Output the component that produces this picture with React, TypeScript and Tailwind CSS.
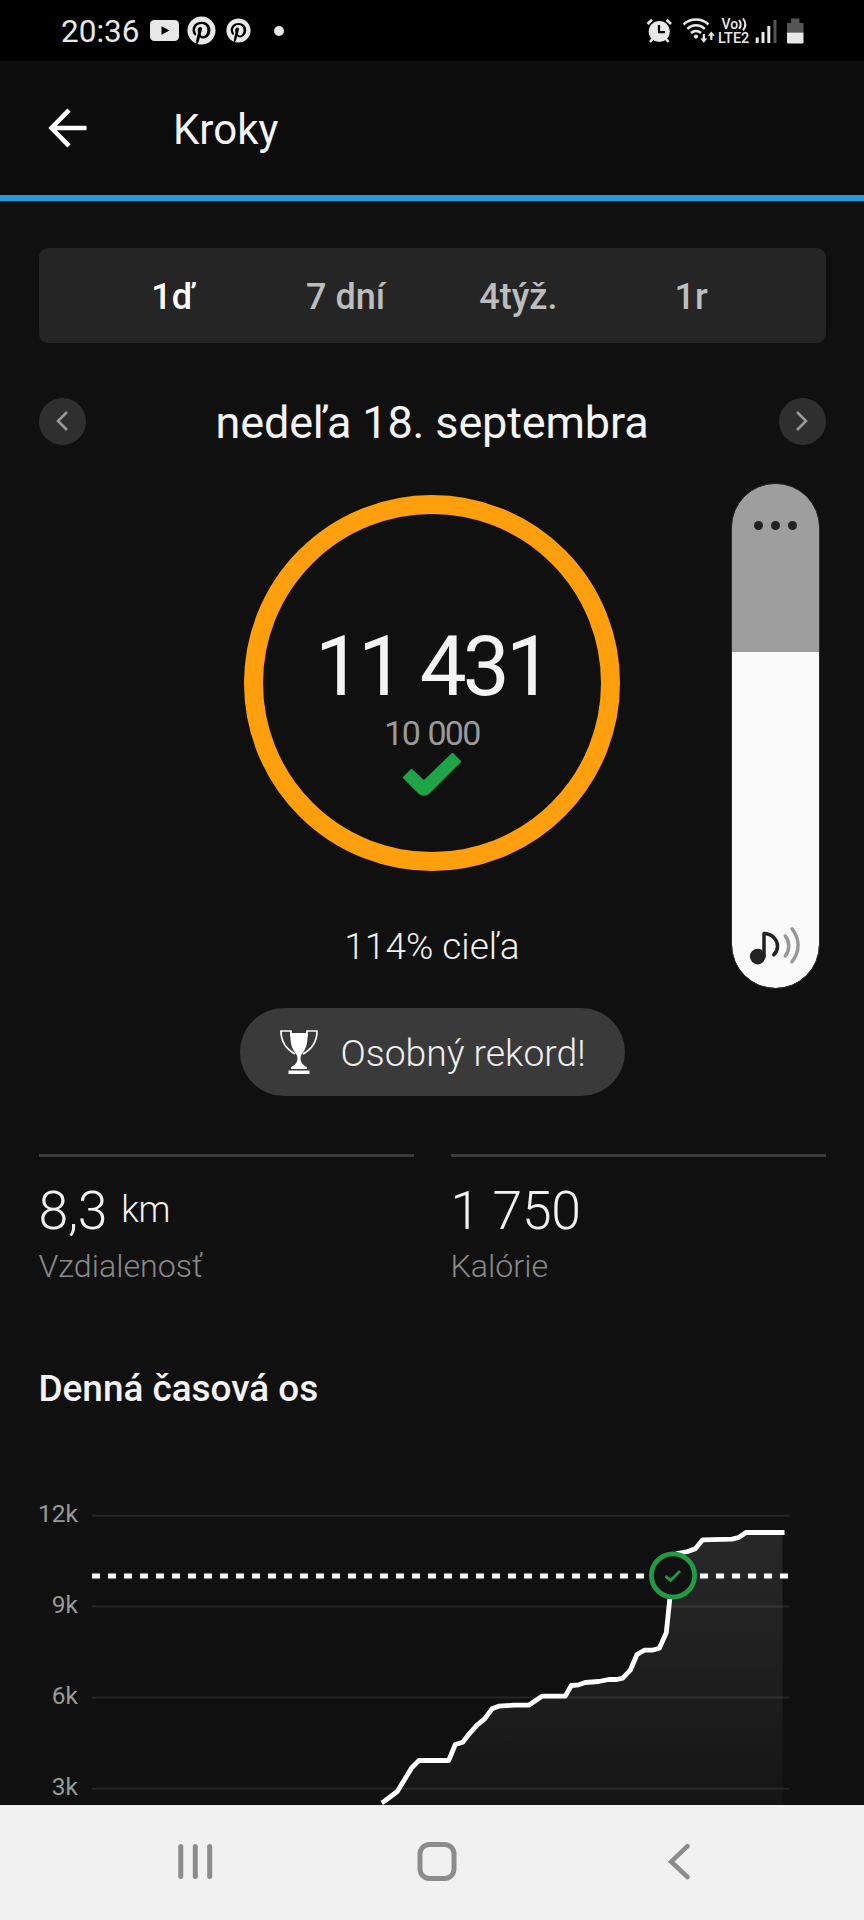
import React from "react";
import { FaPinterest } from "react-icons/fa";

const ranges = ["1ď", "7 dní", "4týž.", "1r"];

const gridLines = [
  { label: "12k", y: 1516.3 },
  { label: "9k", y: 1607 },
  { label: "6k", y: 1698 },
  { label: "3k", y: 1789.3 },
];

const steps =
  "381.7,1803.3 384,1802 397.3,1792 411.7,1768.3 419,1761 448.7,1761 455.3,1745 462.7,1742.7 469.3,1734.3 477,1725.7 484.7,1719.3 492,1709.3 498.7,1706.7 513.7,1705.7 528.7,1705.7 542,1696.7 565.3,1696.7 571.3,1686 578.7,1685.3 585.3,1683 598.7,1682 608.7,1680 617,1680 622.7,1678.7 630.3,1670.7 637,1655 644.3,1650.7 652,1650.7 659.3,1648.7 666.3,1633.3 672,1578 677,1554 687.7,1552 695.3,1549.3 702.7,1540.3 732,1539.7 738.7,1538 746,1533";

function StatusBar() {
  return (
    <div className="flex h-[61px] shrink-0 items-center bg-black pl-[61px] text-[#e8e8e8]">
      <span className="w-[89px] pt-[3px] text-[31.5px] leading-[40px]">20:36</span>
      <svg className="mr-[8px] h-[21px] w-[29px]" viewBox="0 0 29 21">
        <rect width="29" height="21" rx="4.5" fill="#e8e8e8" />
        <path d="M11.5 6.2 19.5 10.5 11.5 14.8z" fill="#000" />
      </svg>
      <FaPinterest className="mr-[10px] size-[29px]" />
      <FaPinterest className="mr-[23px] size-[25px]" />
      <span className="size-[10px] rounded-full bg-[#e8e8e8]" />
      <svg className="ml-auto mr-[58px] h-[30px] w-[161px]" viewBox="645 15 161 30" fill="none" stroke="#e8e8e8">
        <circle cx="659.3" cy="30.5" r="10.6" fill="#e8e8e8" stroke="none" />
        <path d="M647.5 23 652 18.8M671 23 666.6 18.8M652.5 38 650 41M666 38 668.5 41" strokeWidth="2.6" />
        <path d="M659 24v7.2h6" stroke="#000" strokeWidth="2.2" />
        <path d="M683.5 23.5c7-6.6 18-6.6 25 0M687.3 27.8c5-4.6 12.5-4.6 17.5 0M691 32c3-2.6 7-2.6 10 0" strokeWidth="2.5" />
        <circle cx="696" cy="35.6" r="2.1" fill="#e8e8e8" stroke="none" />
        <path d="M703.8 33v6M711.3 39v-6" strokeWidth="2.2" />
        <path d="M700.3 37.5h7l-3.5 4.2zM707.8 34.8h7l-3.5-4.3z" fill="#e8e8e8" stroke="none" />
        <text fontWeight="500" fill="#e8e8e8" stroke="none" fontFamily="Roboto, sans-serif">
          <tspan x="721.5" y="27.5" fontSize="14">Vo</tspan>
          <tspan x="718" y="42" fontSize="14.5">LTE2</tspan>
        </text>
        <path d="M739.2 19c2 2.8 2 6 0 8.8M743 17.5c3 3.8 3 8 0 11.8" strokeWidth="2" />
        <path d="M757.2 36.5V42M763 31V42M768.8 25V42" strokeWidth="3" />
        <path d="M775 19V42" stroke="#555" strokeWidth="3" />
        <path d="M787 22h4v-4.5h8.5V22h4v9.5H787z" fill="#555" stroke="none" />
        <path d="M787 31.5h16.5v9.5a1.5 1.5 0 0 1-1.5 1.5h-13.5a1.5 1.5 0 0 1-1.5-1.5z" fill="#e8e8e8" stroke="none" />
      </svg>
    </div>
  );
}

function Header() {
  return (
    <header className="flex h-[140px] shrink-0 items-center border-b-[6px] border-[#239dd9] bg-[#0c0c0c]">
      <svg className="ml-[48px] h-[40px] w-[40px]" viewBox="0 0 40 40" fill="none" stroke="#fff" strokeWidth="4.6">
        <path d="M21 2.2 3.5 20 21 37.8M3.5 20H38.5" />
      </svg>
      <h1 className="ml-[85px] pt-[4px] text-[42px] leading-[50px] text-[#f4f4f4]">Kroky</h1>
    </header>
  );
}

function RoundArrow({ flip = false }: { flip?: boolean }) {
  return (
    <button className="flex size-[47px] items-center justify-center rounded-full bg-[#2f2f2f]">
      <svg className={flip ? "h-[20px] w-[12px] rotate-180" : "h-[20px] w-[12px]"} viewBox="0 0 12 20" fill="none" stroke="#999" strokeWidth="2.6">
        <path d="M11 1 2 10l9 9" />
      </svg>
    </button>
  );
}

function Trophy() {
  return (
    <svg className="h-[44px] w-[38px]" viewBox="0 0 38 44" fill="#fff">
      <path d="M10.5 3h17c.3 7-.3 13.500-3.800 18.500-2.200 3-3.200 4-3.200 7 0 4 2.500 6.700 6.300 8.500v2H11.200v-2c3.800-1.800 6.300-4.500 6.300-8.500 0-3-1-4-3.200-7C10.800 16.500 10.200 10 10.500 3z" />
      <path d="M11 6.500V1H1c0 11 6 18.500 14 23M27 6.500V1h10c0 11-6 18.500-14 23" fill="none" stroke="#fff" strokeWidth="1.7" />
      <rect x="8.500" y="40.500" width="21" height="3.500" />
    </svg>
  );
}

function VolumeSlider() {
  return (
    <div className="absolute left-[732px] top-[484px] flex h-[504px] w-[87px] flex-col overflow-hidden rounded-full bg-[#fafafa] outline outline-[#2b2b2b]">
      <div className="flex h-[168px] justify-center gap-[7.4px] bg-[#9e9e9e] pt-[37px]">
        <span className="size-[9.4px] rounded-full bg-[#222]" />
        <span className="size-[9.4px] rounded-full bg-[#222]" />
        <span className="size-[9.4px] rounded-full bg-[#222]" />
      </div>
      <svg className="mt-auto mb-[21px] ml-[17px] h-[42px] w-[54px]" viewBox="749 925 54 42" fill="none" strokeLinecap="round">
        <circle cx="757.7" cy="956.6" r="7.8" fill="#222" />
        <path d="M764 956.5V933.5c8 .3 13.5 6 13.5 13 0 3.3-1.3 6-3.7 8.3" stroke="#222" strokeWidth="3.5" strokeLinejoin="round" />
        <path d="M785.3 936c4.6 6 4.6 14 0 20M792 928.8c8 10.500 8 22.500 0 33" stroke="#979797" strokeWidth="3.5" />
      </svg>
    </div>
  );
}

function Stat({ value, unit, label }: { value: string; unit?: string; label: string }) {
  return (
    <div className="flex flex-1 flex-col border-t-[3px] border-[#3a3a3a] pt-[24.5px] font-light">
      <div className="flex gap-[14px] text-[#f2f2f2]">
        <span className="text-[53.5px] leading-[60px] tracking-[-0.3px]">{value}</span>
        {unit && <span className="pt-[4px] text-[36px] leading-[50px] tracking-[-0.3px]">{unit}</span>}
      </div>
      <span className="mt-[5.5px] text-[32.2px] leading-[38px] text-[#8a8a8a]">{label}</span>
    </div>
  );
}

function Timeline() {
  return (
    <svg className="block h-[394.5px] w-full shrink-0" viewBox="0 1410.5 864 394.5" fontFamily="Roboto, sans-serif">
      <defs>
        <linearGradient id="area" gradientUnits="userSpaceOnUse" x1="0" y1="1533" x2="0" y2="1880">
          <stop offset="0" stopColor="#fff" stopOpacity="0.1" />
          <stop offset="1" stopColor="#fff" stopOpacity="0" />
        </linearGradient>
      </defs>
      {gridLines.map((g) => (
        <g key={g.label}>
          <text x="78" y={g.y + 6.4} textAnchor="end" fontSize="24.5" fill="#999">
            {g.label}
          </text>
          <path d={`M92 ${g.y}H789.5`} stroke="#242424" strokeWidth="2" />
        </g>
      ))}
      <polygon points={`${steps} 782.5,1533 782.5,1880 375,1880`} fill="url(#area)" />
      <path d="M92 1576.5H789" stroke="#fff" strokeWidth="5" strokeDasharray="8 8" />
      <polyline points={`${steps} 784.5,1533`} fill="none" stroke="#fff" strokeWidth="4.8" strokeLinejoin="round" />
      <circle cx="673" cy="1576" r="21.6" fill="#101010" stroke="#219a46" strokeWidth="4.8" />
      <path d="M665.5 1576.5 670.5 1581 680 1571.5" fill="none" stroke="#219a46" strokeWidth="2.8" />
    </svg>
  );
}

function NavBar() {
  return (
    <nav className="flex flex-1 items-start bg-[#f1f1f1] pt-[37.5px]">
      <svg className="ml-[178px] h-[40px] w-[35px]" viewBox="0 0 35 40" fill="none" stroke="#8c8c8c" strokeWidth="5" strokeLinecap="round">
        <path d="M2.8 4.5V34.5M17.3 4.5V34.5M31.7 4.5V34.5" />
      </svg>
      <svg className="ml-[203px] h-[40px] w-[42px]" viewBox="0 0 42 40" fill="none" stroke="#8c8c8c" strokeWidth="5">
        <rect x="4" y="2.5" width="34" height="34" rx="9.5" />
      </svg>
      <svg className="ml-[209px] h-[40px] w-[24px]" viewBox="0 0 24 40" fill="none" stroke="#8c8c8c" strokeWidth="4.6" strokeLinecap="round">
        <path d="M20.5 4.2 4.2 19.7 20.5 35" />
      </svg>
    </nav>
  );
}

export default function App() {
  return (
    <div className="relative flex h-[1920px] w-[864px] flex-col overflow-hidden bg-[#101010] font-[Roboto,sans-serif]">
      <StatusBar />
      <Header />
      <main className="flex shrink-0 flex-col items-center px-[38.5px] pt-[47px]">
        <div className="grid h-[94.5px] w-full grid-cols-4 items-center rounded-[9px] bg-[#252525] px-[48px] pt-[4px]">
          {ranges.map((r, i) => (
            <span
              key={r}
              className={
                i === 0
                  ? "text-center text-[36px] leading-[42px] font-medium text-white"
                  : "text-center text-[36px] leading-[42px] font-medium text-[#bdbdbd]"
              }
            >
              {r}
            </span>
          ))}
        </div>

        <div className="mt-[55px] flex h-[47px] w-full items-center justify-between">
          <RoundArrow />
          <h2 className="pt-[4.5px] text-[45px] leading-[54px] tracking-[-0.15px] text-[#f4f4f4]">nedeľa 18. septembra</h2>
          <RoundArrow flip />
        </div>

        <div className="mt-[50px] flex size-[376px] flex-col items-center rounded-full border-[19.5px] border-[#ff9f0d] pt-[111.5px]">
          <span className="text-[83.5px] leading-[84px] tracking-[-3.8px] whitespace-nowrap text-[#f4f4f4] [word-spacing:1.5px]">11 431</span>
          <span className="mt-[4px] text-[34px] leading-[40px] tracking-[-1.7px] whitespace-nowrap text-[#9a9a9a] [word-spacing:1.5px]">10 000</span>
          <svg className="h-[43px] w-[58px] shrink-0" viewBox="0 0 58 43" fill="#1ea446" stroke="#1ea446" strokeWidth="3" strokeLinejoin="round">
            <path d="M1.5 24.5 8.5 17.5 21 29 49.5 1.5 56.5 8.5 25.5 39.5Q21 43 16.5 39.5z" />
          </svg>
        </div>

        <p className="mt-[54.5px] text-[37px] leading-[44px] font-light text-[#f0f0f0]">114% cieľa</p>

        <div className="mt-[38.5px] flex h-[88px] w-[385px] items-center rounded-full bg-[#3a3a3a] pl-[40.5px]">
          <Trophy />
          <span className="ml-[22.5px] pt-[3px] text-[37.3px] leading-[44px] font-light whitespace-nowrap text-[#f0f0f0]">Osobný rekord!</span>
        </div>

        <div className="mt-[58px] flex w-full gap-[37px]">
          <Stat value="8,3" unit="km" label="Vzdialenosť" />
          <Stat value="1 750" label="Kalórie" />
        </div>

        <h3 className="mt-[83.5px] w-full text-[36.9px] leading-[42px] font-medium text-[#f4f4f4]">Denná časová os</h3>
      </main>
      <Timeline />
      <NavBar />
      <VolumeSlider />
    </div>
  );
}
